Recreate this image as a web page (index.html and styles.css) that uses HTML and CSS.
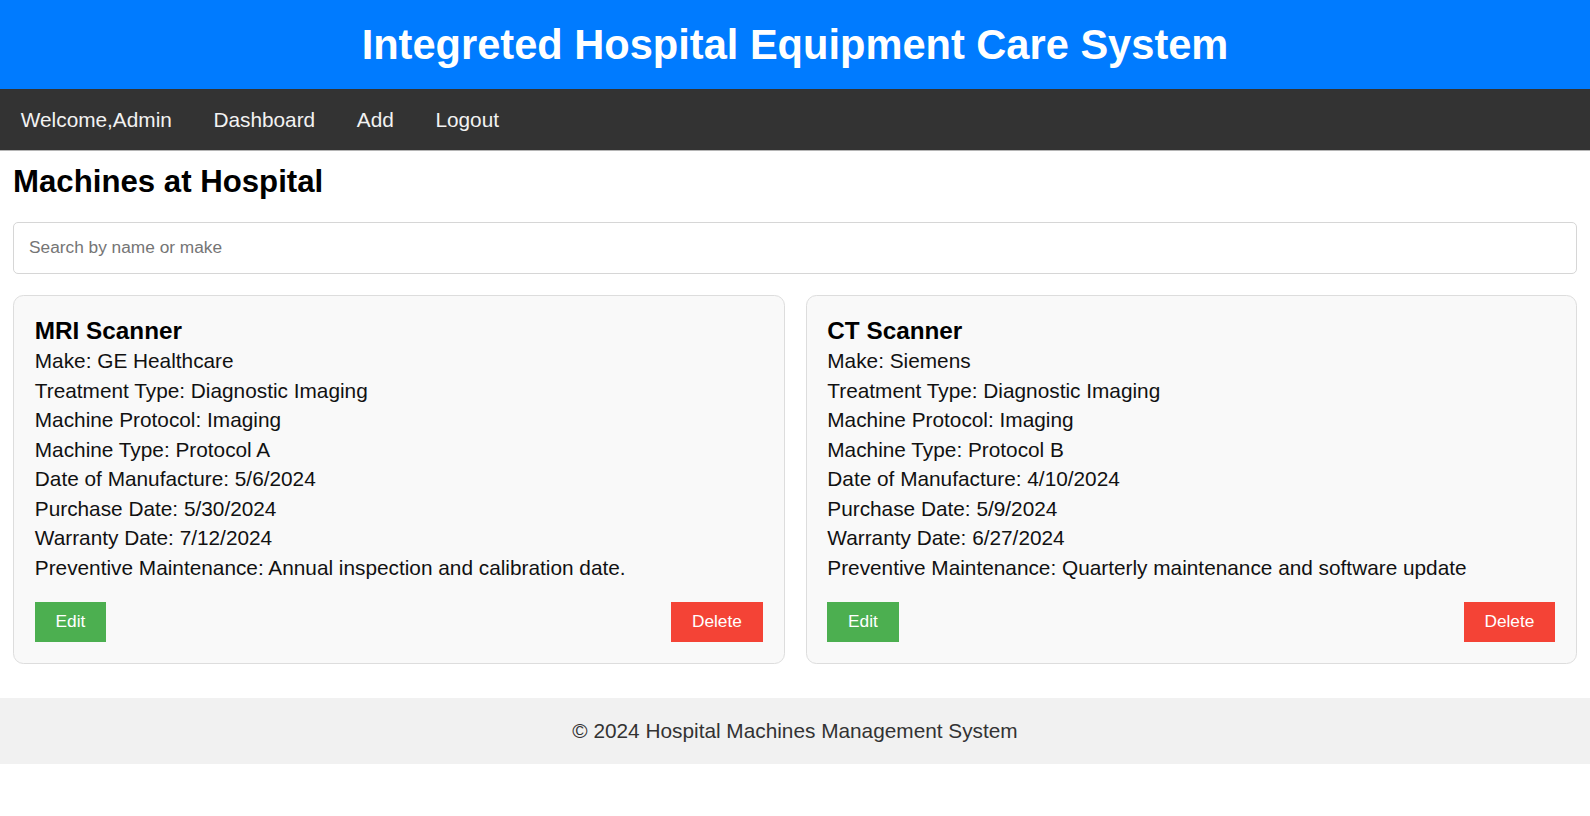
FILE: index.html
```html
<!DOCTYPE html>
<html lang="en">
<head>
<meta charset="utf-8">
<title>Integreted Hospital Equipment Care System</title>
<link rel="stylesheet" href="styles.css">
</head>
<body>
<header class="site-header">
  <h1 class="site-title">Integreted Hospital Equipment Care System</h1>
</header>
<nav class="main-nav">
  <span class="nav-item">Welcome,Admin</span>
  <a class="nav-item" href="#">Dashboard</a>
  <a class="nav-item" href="#">Add</a>
  <a class="nav-item" href="#">Logout</a>
</nav>
<main class="content">
  <h2 class="page-title">Machines at Hospital</h2>
  <input class="search" type="text" placeholder="Search by name or make">
  <div class="machine-grid">
    <div class="machine-card">
      <h3 class="machine-name">MRI Scanner</h3>
      <p class="machine-field">Make: GE Healthcare</p>
      <p class="machine-field">Treatment Type: Diagnostic Imaging</p>
      <p class="machine-field">Machine Protocol: Imaging</p>
      <p class="machine-field">Machine Type: Protocol A</p>
      <p class="machine-field">Date of Manufacture: 5/6/2024</p>
      <p class="machine-field">Purchase Date: 5/30/2024</p>
      <p class="machine-field">Warranty Date: 7/12/2024</p>
      <p class="machine-field">Preventive Maintenance: Annual inspection and calibration date.</p>
      <div class="card-actions">
        <button class="btn btn-edit">Edit</button>
        <button class="btn btn-delete">Delete</button>
      </div>
    </div>
    <div class="machine-card">
      <h3 class="machine-name">CT Scanner</h3>
      <p class="machine-field">Make: Siemens</p>
      <p class="machine-field">Treatment Type: Diagnostic Imaging</p>
      <p class="machine-field">Machine Protocol: Imaging</p>
      <p class="machine-field">Machine Type: Protocol B</p>
      <p class="machine-field">Date of Manufacture: 4/10/2024</p>
      <p class="machine-field">Purchase Date: 5/9/2024</p>
      <p class="machine-field">Warranty Date: 6/27/2024</p>
      <p class="machine-field">Preventive Maintenance: Quarterly maintenance and software update</p>
      <div class="card-actions">
        <button class="btn btn-edit">Edit</button>
        <button class="btn btn-delete">Delete</button>
      </div>
    </div>
  </div>
</main>
<footer class="site-footer">© 2024 Hospital Machines Management System</footer>
</body>
</html>
```
FILE: styles.css
```css
* { box-sizing: border-box; }

body {
  margin: 0;
  font-family: "Liberation Sans", Arial, sans-serif;
  color: #000;
  background: #fff;
}

.site-header {
  background: #007bff;
  color: #fff;
  padding: 20.8px;
  text-align: center;
}

.site-title {
  margin: 0;
  font-size: 41.6px;
  font-weight: bold;
  line-height: 47.8px;
}

.main-nav {
  display: flex;
  background: #333;
  box-shadow: 0 1px 0 #b5b5b5;
}

.nav-item {
  display: block;
  padding: 18.2px 20.8px;
  color: #f2f2f2;
  font-size: 20.8px;
  line-height: 24px;
  text-decoration: none;
}

.content {
  padding: 14px 13px 13px;
}

.page-title {
  margin: 0 0 22px;
  font-size: 31.2px;
  line-height: 36px;
  font-weight: bold;
}

.search {
  display: block;
  width: 100%;
  height: 52px;
  padding: 0 15px;
  border: 1px solid #d6d6d6;
  border-radius: 5px;
  font-family: "Liberation Sans", Arial, sans-serif;
  font-size: 17.3px;
  color: #333;
  background: #fff;
  margin: 0 0 21px;
}

.search::placeholder {
  color: #757575;
}

.machine-grid {
  display: grid;
  grid-template-columns: 1fr 1fr;
  gap: 21px;
}

.machine-card {
  background: #f9f9f9;
  border: 1px solid #ddd;
  border-radius: 10.4px;
  padding: 20.8px;
}

.machine-name {
  margin: 0 0 1.7px;
  font-size: 24.3px;
  line-height: 28px;
  font-weight: bold;
}

.machine-field {
  margin: 0;
  font-size: 20.8px;
  line-height: 29.5px;
  color: #111;
}

.card-actions {
  display: flex;
  justify-content: space-between;
  margin-top: 19.4px;
}

.btn {
  border: none;
  border-radius: 0;
  padding: 10.4px 20.8px;
  font-family: "Liberation Sans", Arial, sans-serif;
  font-size: 17.3px;
  line-height: 19.9px;
  color: #fff;
  cursor: pointer;
}

.btn-edit { background: #4caf50; }
.btn-delete { background: #f44336; }

.site-footer {
  margin-top: 21px;
  background: #f1f1f1;
  color: #333;
  text-align: center;
  padding: 20.8px;
  font-size: 20.8px;
  line-height: 24px;
}
```
